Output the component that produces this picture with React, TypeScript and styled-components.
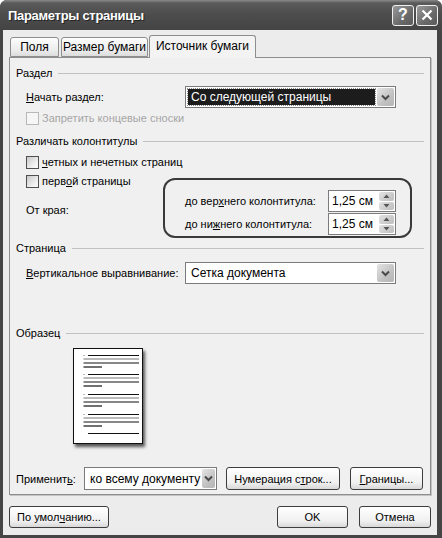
import styled, { createGlobalStyle } from "styled-components";

const GlobalStyle = createGlobalStyle`
  html, body { margin: 0; padding: 0; background: #ffffff; }
  body {
    font-family: "Liberation Sans", Arial, sans-serif;
    font-size: 11px;
    color: #000;
    white-space: nowrap;
  }
  * { box-sizing: border-box; }
`;

const Window = styled.div`
  width: 442px;
  height: 538px;
  background: #454545;
  border-radius: 7px 7px 0 0;
  display: flex;
  flex-direction: column;
  overflow: hidden;
`;

const TitleBar = styled.div`
  height: 30px;
  display: flex;
  align-items: center;
  padding: 0 4px 0 8px;
  background: linear-gradient(#8a8a8a 0, #5a5a5a 3px, #4c4c4c 50%, #444 100%);
`;

const TitleText = styled.div`
  color: #fff;
  font-weight: bold;
  font-size: 13px;
  letter-spacing: -0.3px;
  text-shadow: 1px 1px 0 #222;
`;

const TitleButtons = styled.div`
  margin-left: auto;
  display: flex;
  gap: 2px;
`;

const CaptionButton = styled.div`
  width: 22px;
  height: 21px;
  border: 1px solid #f0f0f0;
  border-radius: 3px;
  background: linear-gradient(135deg, #9a9a9a, #6a6a6a 60%, #5a5a5a);
  color: #fff;
  display: flex;
  align-items: center;
  justify-content: center;
  font-weight: bold;
  font-size: 16px;
`;

const Body = styled.div`
  flex: 1;
  background: #ececec;
  margin: 0 5px 3px 3px;
  padding: 5px 6px 0 6px;
  display: flex;
  flex-direction: column;
`;

const TabStrip = styled.div`
  display: flex;
  align-items: flex-end;
  height: 22px;
  padding-left: 1px;
  position: relative;
  z-index: 1;
`;

const Tab = styled.div<{ $w: number; $active?: boolean }>`
  width: ${(p) => p.$w}px;
  height: ${(p) => (p.$active ? 23 : 20)}px;
  margin-right: ${(p) => (p.$active ? 0 : 2)}px;
  margin-left: ${(p) => (p.$active ? -1 : 0)}px;
  margin-bottom: ${(p) => (p.$active ? -1 : 0)}px;
  border: 1px solid #8e8e8e;
  border-bottom: ${(p) => (p.$active ? "none" : "1px solid #8e8e8e")};
  border-radius: 3px 3px 0 0;
  background: ${(p) =>
    p.$active ? "#f3f3f3" : "linear-gradient(#fdfdfd, #ebebeb 70%, #dcdcdc)"};
  display: flex;
  align-items: center;
  justify-content: center;
  font-size: 12px;
  padding-bottom: ${(p) => (p.$active ? 3 : 0)}px;
`;

const Panel = styled.div`
  height: 438px;
  border: 1px solid #8e8e8e;
  background: #f0f0f0;
  box-shadow: 1px 1px 0 #c4c4c4;
  padding: 7px 6px 4px 6px;
  display: flex;
  flex-direction: column;
`;

const Header = styled.div<{ $mt: number }>`
  display: flex;
  align-items: center;
  gap: 6px;
  height: 16px;
  margin-top: ${(p) => p.$mt}px;
`;

const HeaderLine = styled.div`
  flex: 1;
  height: 1px;
  background: #c2c2c2;
`;

const Row = styled.div<{ $mt: number }>`
  display: flex;
  align-items: center;
  padding-left: 10px;
  margin-top: ${(p) => p.$mt}px;
`;

const Label = styled.div<{ $w: number }>`
  width: ${(p) => p.$w}px;
  flex-shrink: 0;
`;

const U = styled.span`
  text-decoration: underline;
`;

const Select = styled.div<{ $w: number; $h?: number }>`
  width: ${(p) => p.$w}px;
  height: ${(p) => p.$h ?? 22}px;
  border: 1px solid #7b7b7b;
  background: #fff;
  display: flex;
  align-items: stretch;
  padding: 1px;
`;

const SelectValue = styled.div<{ $selected?: boolean }>`
  flex: 1;
  display: flex;
  align-items: center;
  padding-left: 3px;
  margin: 1px 2px 1px 1px;
  background: ${(p) => (p.$selected ? "#1c1c1c" : "transparent")};
  color: ${(p) => (p.$selected ? "#fff" : "#000")};
  outline: ${(p) => (p.$selected ? "1px dotted #888" : "none")};
  font-size: 12px;
`;

const DropButton = styled.div`
  width: 17px;
  border-radius: 2px;
  background: linear-gradient(135deg, #e4e4e4, #c2c2c2 60%, #b4b4b4);
  display: flex;
  align-items: center;
  justify-content: center;
`;

const CheckRow = styled.div<{ $mt: number; $disabled?: boolean }>`
  display: flex;
  align-items: center;
  height: 14px;
  margin-top: ${(p) => p.$mt}px;
  color: ${(p) => (p.$disabled ? "#a6a6a6" : "#000")};
`;

const CheckBox = styled.div<{ $disabled?: boolean }>`
  width: 13px;
  height: 13px;
  border: 1px solid ${(p) => (p.$disabled ? "#b8b8b8" : "#505050")};
  background: ${(p) =>
    p.$disabled ? "#f6f6f6" : "linear-gradient(135deg, #c9c9c9, #f2f2f2 70%, #fafafa)"};
  margin-right: 3px;
`;

const EdgeGrid = styled.div`
  display: grid;
  grid-template-columns: 137px 249px;
  padding-left: 10px;
  margin-top: 5px;
`;

const LeftCol = styled.div`
  display: flex;
  flex-direction: column;
`;

const EdgeLabel = styled.div`
  margin-top: 16px;
`;

const MarkBox = styled.div`
  margin-top: 4px;
  height: 60px;
  border: 2px solid #3a3a3a;
  border-radius: 12px;
  padding: 10px 0 0 20px;
  display: flex;
  flex-direction: column;
  gap: 1px;
`;

const SpinRow = styled.div`
  display: flex;
  align-items: center;
  height: 22px;
`;

const Spinner = styled.div`
  width: 68px;
  height: 22px;
  border: 1px solid #7b7b7b;
  background: #fff;
  display: flex;
  padding: 1px;
`;

const SpinValue = styled.div`
  flex: 1;
  display: flex;
  align-items: center;
  padding-left: 2px;
  font-size: 12px;
`;

const SpinButtons = styled.div`
  width: 15px;
  display: flex;
  flex-direction: column;
  gap: 1px;
`;

const SpinHalf = styled.div`
  flex: 1;
  border-radius: 2px;
  background: linear-gradient(135deg, #e2e2e2, #bdbdbd);
  display: flex;
  align-items: center;
  justify-content: center;
`;

const Preview = styled.div`
  margin: 7px 0 0 57px;
  width: 70px;
  height: 96px;
  border: 1px solid #111;
  background: #fff;
  box-shadow: 2px 3px 3px #555;
`;

const BottomRow = styled.div`
  margin-top: auto;
  display: flex;
  align-items: center;
`;

const Button = styled.div<{ $w: number; $ml?: number; $h?: number }>`
  width: ${(p) => p.$w}px;
  height: ${(p) => p.$h ?? 23}px;
  margin-left: ${(p) => p.$ml ?? 0}px;
  border: 1px solid #3d3d3d;
  border-radius: 3px;
  background: linear-gradient(#ffffff, #f0f0f0 70%, #d8d8d8);
  display: flex;
  align-items: center;
  justify-content: center;
`;

const ButtonBar = styled.div`
  display: flex;
  align-items: center;
  margin-top: 11px;
`;

const Chevron = () => (
  <svg width="9" height="7" viewBox="0 0 9 7">
    <path d="M1 1.5 L4.5 5 L8 1.5" fill="none" stroke="#4a4a4a" strokeWidth="2" />
  </svg>
);

const Arrow = ({ up }: { up?: boolean }) => (
  <svg width="7" height="4" viewBox="0 0 7 4">
    <path d={up ? "M0.5 4 L3.5 0.5 L6.5 4 Z" : "M0.5 0 L3.5 3.5 L6.5 0 Z"} fill="#555" />
  </svg>
);

const PageLines = () => {
  const groups = [5, 24, 44, 64];
  return (
    <svg width="68" height="94" viewBox="0 0 68 94">
      {groups.map((y) => (
        <g key={y} stroke="#111" strokeWidth="1.2">
          <line x1="9" y1={y + 1.5} x2="11" y2={y + 1.5} stroke="#bbb" />
          <line x1="14" y1={y + 1.5} x2="65" y2={y + 1.5} />
          <line x1="9.5" y1={y + 5} x2="65" y2={y + 5} stroke="#777" />
          <line x1="9.5" y1={y + 9} x2="65" y2={y + 9} />
          <line x1="9.5" y1={y + 13} x2="28" y2={y + 13} />
        </g>
      ))}
      <g stroke="#111" strokeWidth="1.2">
        <line x1="14" y1="84.5" x2="65" y2="84.5" />
      </g>
    </svg>
  );
};

export default function App() {
  return (
    <>
      <GlobalStyle />
      <Window>
        <TitleBar>
          <TitleText>Параметры страницы</TitleText>
          <TitleButtons>
            <CaptionButton>?</CaptionButton>
            <CaptionButton>
              <svg width="12" height="12" viewBox="0 0 12 12">
                <path d="M1.5 1.5 L10.5 10.5 M10.5 1.5 L1.5 10.5" stroke="#fff" strokeWidth="2.2" />
              </svg>
            </CaptionButton>
          </TitleButtons>
        </TitleBar>
        <Body>
          <TabStrip>
            <Tab $w={49}>Поля</Tab>
            <Tab $w={87}>Размер бумаги</Tab>
            <Tab $w={107} $active>
              Источник бумаги
            </Tab>
          </TabStrip>
          <Panel>
            <Header $mt={0}>
              Раздел
              <HeaderLine />
            </Header>
            <Row $mt={5}>
              <Label $w={159}>
                <U>Н</U>ачать раздел:
              </Label>
              <Select $w={211}>
                <SelectValue $selected>Со следующей страницы</SelectValue>
                <DropButton>
                  <Chevron />
                </DropButton>
              </Select>
            </Row>
            <Row $mt={0}>
              <CheckRow $mt={3} $disabled>
                <CheckBox $disabled />
                Запретить концевые сноски
              </CheckRow>
            </Row>
            <Header $mt={8}>
              Различать колонтитулы
              <HeaderLine />
            </Header>
            <Row $mt={0}>
              <CheckRow $mt={6}>
                <CheckBox />
                <U>ч</U>етных и нечетных страниц
              </CheckRow>
            </Row>
            <EdgeGrid>
              <LeftCol>
                <CheckRow $mt={0}>
                  <CheckBox />
                  перв<U>о</U>й страницы
                </CheckRow>
                <EdgeLabel>От края:</EdgeLabel>
              </LeftCol>
              <MarkBox>
                <SpinRow>
                  <Label $w={143}>
                    до вер<U>х</U>него колонтитула:
                  </Label>
                  <Spinner>
                    <SpinValue>1,25 см</SpinValue>
                    <SpinButtons>
                      <SpinHalf>
                        <Arrow up />
                      </SpinHalf>
                      <SpinHalf>
                        <Arrow />
                      </SpinHalf>
                    </SpinButtons>
                  </Spinner>
                </SpinRow>
                <SpinRow>
                  <Label $w={143}>
                    до ни<U>ж</U>него колонтитула:
                  </Label>
                  <Spinner>
                    <SpinValue>1,25 см</SpinValue>
                    <SpinButtons>
                      <SpinHalf>
                        <Arrow up />
                      </SpinHalf>
                      <SpinHalf>
                        <Arrow />
                      </SpinHalf>
                    </SpinButtons>
                  </Spinner>
                </SpinRow>
              </MarkBox>
            </EdgeGrid>
            <Header $mt={2}>
              Страница
              <HeaderLine />
            </Header>
            <Row $mt={6}>
              <Label $w={159}>
                <U>В</U>ертикальное выравнивание:
              </Label>
              <Select $w={211}>
                <SelectValue>Сетка документа</SelectValue>
                <DropButton>
                  <Chevron />
                </DropButton>
              </Select>
            </Row>
            <Header $mt={41}>
              Образец
              <HeaderLine />
            </Header>
            <Preview>
              <PageLines />
            </Preview>
            <BottomRow>
              <Label $w={68}>
                Применит<U>ь</U>:
              </Label>
              <Select $w={133} $h={23}>
                <SelectValue>ко всему документу</SelectValue>
                <DropButton>
                  <Chevron />
                </DropButton>
              </Select>
              <Button $w={114} $ml={9}>
                Нумерация с<U>т</U>рок...
              </Button>
              <Button $w={73} $ml={10}>
                <U>Г</U>раницы...
              </Button>
            </BottomRow>
          </Panel>
          <ButtonBar>
            <Button $w={100} $h={22}>
              По умол<U>ч</U>анию...
            </Button>
            <Button $w={71} $h={22} $ml={168}>
              OK
            </Button>
            <Button $w={72} $h={22} $ml={11}>
              Отмена
            </Button>
          </ButtonBar>
        </Body>
      </Window>
    </>
  );
}
